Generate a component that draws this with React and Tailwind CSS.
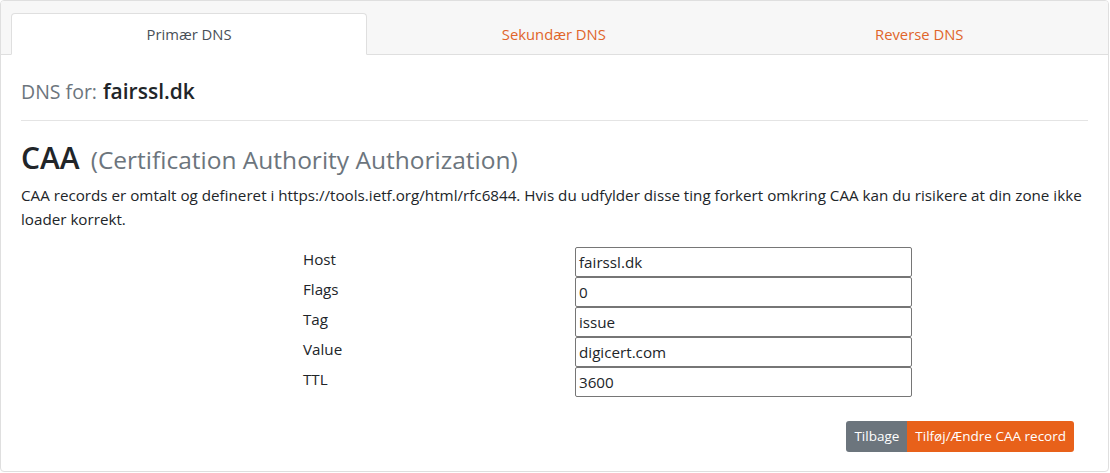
export default function App() {
  const rows = [
    ["Host", "fairssl.dk"],
    ["Flags", "0"],
    ["Tag", "issue"],
    ["Value", "digicert.com"],
    ["TTL", "3600"],
  ];
  return (
    <div className="w-[1110px] h-[473px] bg-white" style={{ fontFamily: '"Open Sans", "Noto Sans", sans-serif' }}>
      <div className="w-[1109px] h-[472px] border border-[#dfdfdf] rounded-[4px] overflow-hidden flex flex-col">
        <div className="bg-[#f7f7f7] border-b border-[#dfdfdf] pt-[12px] px-[10px]">
          <div className="flex -mb-px">
            <div className="flex-auto h-[42px] px-4 bg-white border border-[#dfdfdf] border-b-white rounded-t-[4px] flex items-center justify-center text-[14.8px] text-[#495057]">
              Primær DNS
            </div>
            <div className="flex-auto h-[42px] px-4 flex items-center justify-center text-[14.8px] text-[#e0652a]">
              Sekundær DNS
            </div>
            <div className="flex-auto h-[42px] px-4 flex items-center justify-center text-[14.8px] text-[#e0652a]">
              Reverse DNS
            </div>
          </div>
        </div>
        <div className="px-[20px] pt-[21px]">
          <div className="flex items-baseline gap-[6px] h-[34px]">
            <span className="text-[19.5px] text-[#6c757d]">DNS for:</span>
            <span className="text-[21px] font-semibold text-[#212529]">fairssl.dk</span>
          </div>
          <div className="border-t border-[#e4e4e4] mt-[10px]" />
          <div className="mt-[22px] flex items-baseline gap-[11px] h-[40px]">
            <span className="text-[30px] font-semibold text-[#212529] leading-none">CAA</span>
            <span className="text-[24.5px] text-[#6c757d] leading-none">(Certification Authority Authorization)</span>
          </div>
          <p className="text-[15.2px] leading-[24px] text-[#212529] mt-0">
            CAA records er omtalt og defineret i https://tools.ietf.org/html/rfc6844. Hvis du udfylder disse ting forkert omkring CAA kan du risikere at din zone ikke loader korrekt.
          </p>
          <div className="mt-[16px] ml-[282px] flex flex-col">
            {rows.map(([label, value]) => (
              <div key={label} className="flex h-[30px]">
                <div className="w-[272px] text-[15.2px] text-[#212529] leading-[24px]">{label}</div>
                <div className="w-[337px] h-[30px] border border-[#767676] rounded-[2px] px-[3px] flex items-center text-[15.2px] text-[#212529]">
                  {value}
                </div>
              </div>
            ))}
          </div>
          <div className="flex justify-end mt-[24px] pr-[14px]">
            <div className="h-[31px] px-[8px] bg-[#6c757d] text-white text-[13.5px] flex items-center rounded-l-[3px]">Tilbage</div>
            <div className="h-[31px] px-[8px] bg-[#e8611a] text-white text-[13.5px] flex items-center rounded-r-[3px]">Tilføj/Ændre CAA record</div>
          </div>
        </div>
      </div>
    </div>
  );
}
